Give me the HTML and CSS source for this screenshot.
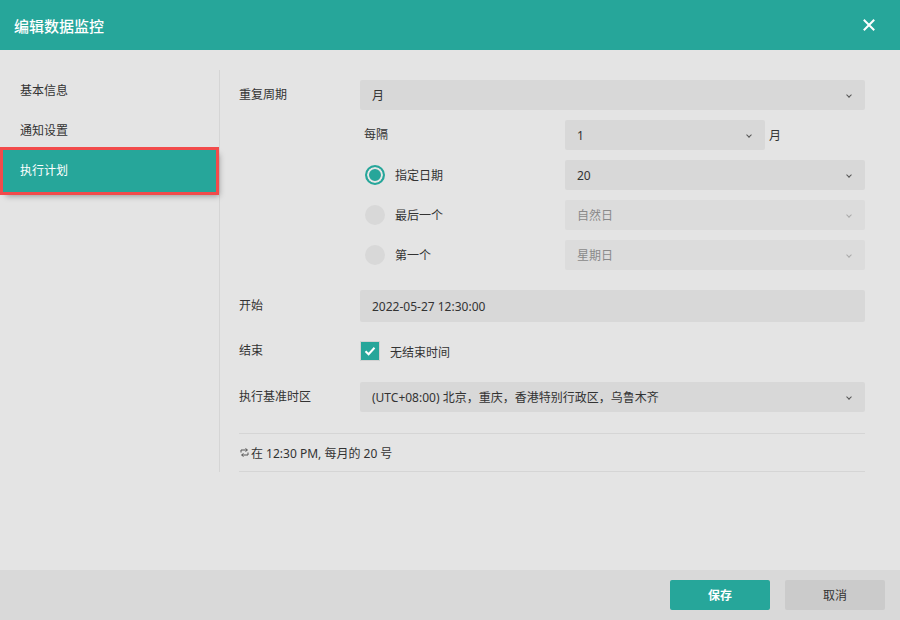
FILE: index.html
```
<!DOCTYPE html>
<html lang="zh-CN">

<head>
  <meta charset="UTF-8">
  <meta name="viewport" content="width=device-width, initial-scale=1.0">
  <title>编辑数据监控</title>
  <link rel="stylesheet" href="styles.css">
</head>

<body>
  <div class="dialog">
    <div class="header">
      <span class="title">编辑数据监控</span>
      <svg class="close" width="12" height="12" viewBox="0 0 12 12">
        <path d="M1.5 1.5L10.5 10.5M10.5 1.5L1.5 10.5" stroke="#fff" stroke-width="2" stroke-linecap="square" />
      </svg>
    </div>

    <div class="content">
      <!-- 左側選單 -->
      <ul class="nav">
        <li class="nav-item">基本信息</li>
        <li class="nav-item">通知设置</li>
        <li class="nav-item active">执行计划</li>
      </ul>

      <!-- 表單 -->
      <div class="form">
        <div class="row">
          <label class="label">重复周期</label>
          <div class="select">月<i class="arrow"></i></div>
        </div>

        <div class="sub">
          <div class="sub-row">
            <span class="sub-label every">每隔</span>
            <div class="inline">
              <div class="select short">1<i class="arrow"></i></div>
              <span class="unit">月</span>
            </div>
          </div>
          <div class="sub-row">
            <span class="sub-label"><i class="radio checked"></i>指定日期</span>
            <div class="select">20<i class="arrow"></i></div>
          </div>
          <div class="sub-row">
            <span class="sub-label"><i class="radio"></i>最后一个</span>
            <div class="select disabled">自然日<i class="arrow"></i></div>
          </div>
          <div class="sub-row">
            <span class="sub-label"><i class="radio"></i>第一个</span>
            <div class="select disabled">星期日<i class="arrow"></i></div>
          </div>
        </div>

        <div class="row start">
          <label class="label">开始</label>
          <div class="input">2022-05-27 12:30:00</div>
        </div>

        <div class="row end">
          <label class="label">结束</label>
          <div class="check-wrap">
            <span class="checkbox">
              <svg width="14" height="14" viewBox="0 0 14 14">
                <path d="M2.5 7.2L5.6 10.2L11.5 3.8" fill="none" stroke="#fff" stroke-width="2" />
              </svg>
            </span>
            无结束时间
          </div>
        </div>

        <div class="row zone">
          <label class="label">执行基准时区</label>
          <div class="select">(UTC+08:00) 北京，重庆，香港特别行政区，乌鲁木齐<i class="arrow"></i></div>
        </div>

        <div class="summary">
          <svg class="repeat" width="9" height="9" viewBox="0 0 9 9">
            <path d="M1 4.5V2H7M5.5 0.5L7.5 2L5.5 3.5M8 4.5V7H2M3.5 5.5L1.5 7L3.5 8.5" fill="none" stroke="#555" stroke-width="1" />
          </svg>
          在 12:30 PM, 每月的 20 号
        </div>
      </div>
    </div>

    <div class="footer">
      <button class="btn save">保存</button>
      <button class="btn cancel">取消</button>
    </div>
  </div>
</body>

</html>
```

FILE: styles.css
```
* {
  margin: 0;
  padding: 0;
  box-sizing: border-box;
  list-style: none;
}

body {
  width: 900px;
  height: 620px;
  background: #e4e4e4;
  color: #333;
  font-family: "Noto Sans", "Noto Sans CJK SC", sans-serif;
  font-size: 12px;
  overflow: hidden;
}

.dialog {
  height: 620px;
  display: flex;
  flex-direction: column;
}

/* 標題列 */
.header {
  height: 50px;
  flex-shrink: 0;
  background: #26a69a;
  display: flex;
  justify-content: space-between;
  align-items: center;
  padding: 0 25px 0 14px;
}

.title {
  color: #fff;
  font-size: 15px;
  font-weight: 500;
}

.content {
  display: flex;
  padding-top: 20px;
}

.nav {
  width: 220px;
  flex-shrink: 0;
  border-right: 1px solid #d5d5d5;
}

.nav-item {
  height: 40px;
  line-height: 40px;
  padding: 1px 0 0 20px;
  font-size: 12px;
}

.nav-item.active {
  height: 42px;
  line-height: 42px;
  margin: 0 3px;
  padding: 0 0 0 17px;
  background: #26a69a;
  color: #fff;
  outline: 3px solid #f24b4b;
  box-shadow: 3px 4px 6px rgba(0, 0, 0, 0.35);
}

.form {
  flex: 1;
  padding: 10px 35px 0 19px;
}

.row {
  display: flex;
  align-items: center;
}

.label {
  width: 121px;
  flex-shrink: 0;
  margin-top: -3px;
}

.select,
.input {
  flex: 1;
  height: 30px;
  line-height: 31px;
  padding: 0 12px;
  background: #d8d8d8;
  border-radius: 2px;
  position: relative;
  white-space: nowrap;
}

.input {
  height: 32px;
  line-height: 33px;
}

/* 下拉箭頭 */
.arrow {
  position: absolute;
  right: 14px;
  top: 13px;
  width: 4px;
  height: 4px;
  border-right: 1px solid #555;
  border-bottom: 1px solid #555;
  transform: rotate(45deg);
}

.select.disabled {
  background: #dcdcdc;
  color: #8a8a8a;
}

.select.disabled .arrow {
  border-color: #aaa;
}

.sub {
  margin: 10px 0 20px 121px;
  display: flex;
  flex-direction: column;
  gap: 10px;
}

.sub-row {
  display: grid;
  grid-template-columns: 205px 1fr;
  align-items: center;
}

.sub-label {
  display: flex;
  align-items: center;
  padding-left: 5px;
}

.sub-label.every {
  padding-left: 4px;
  margin-top: -3px;
}

.inline {
  display: flex;
  align-items: center;
}

.select.short {
  flex: none;
  width: 200px;
}

.unit {
  margin-left: 4px;
}

.radio {
  width: 20px;
  height: 20px;
  border-radius: 50%;
  background: #d8d8d8;
  margin-right: 10px;
}

.radio.checked {
  background: #26a69a;
  border: 2px solid #26a69a;
  box-shadow: inset 0 0 0 2px #e6e6e6;
}

.end {
  margin-top: 14px;
  height: 30px;
}

.check-wrap {
  display: flex;
  align-items: center;
  padding-top: 2px;
}

.checkbox {
  width: 20px;
  height: 20px;
  margin-right: 10px;
  margin-top: -2px;
  background: #26a69a;
  border: 1px solid #d2d2d2;
  border-radius: 1px;
  display: flex;
  justify-content: center;
  align-items: center;
}

.zone {
  margin-top: 16px;
}

.summary {
  margin-top: 21px;
  height: 39px;
  border-top: 1px solid #d5d5d5;
  border-bottom: 1px solid #d5d5d5;
  display: flex;
  align-items: center;
  padding-left: 1px;
}

.repeat {
  margin-right: 2px;
}

/* 底部按鈕 */
.footer {
  margin-top: auto;
  height: 50px;
  background: #d9d9d9;
  display: flex;
  justify-content: flex-end;
  align-items: center;
  gap: 15px;
  padding-right: 15px;
}

.btn {
  width: 100px;
  height: 30px;
  border: none;
  border-radius: 2px;
  font-family: "Noto Sans", "Noto Sans CJK SC", sans-serif;
  font-size: 12px;
  cursor: pointer;
}

.save {
  background: #26a69a;
  color: #fff;
  font-weight: bold;
}

.cancel {
  background: #cbcbcb;
  color: #333;
}
```
